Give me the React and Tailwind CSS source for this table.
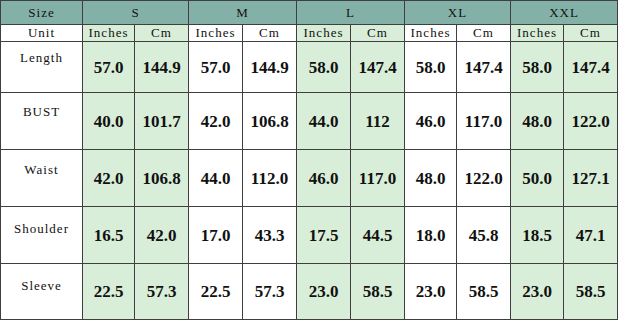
import React from "react";

const sizes = ["S", "M", "L", "XL", "XXL"];
const green = [true, false, true, false, true];

const rows = [
  { label: "Length", pt: "pt-[9px]", v: ["57.0", "144.9", "57.0", "144.9", "58.0", "147.4", "58.0", "147.4", "58.0", "147.4"] },
  { label: "BUST", pt: "pt-[12px]", v: ["40.0", "101.7", "42.0", "106.8", "44.0", "112", "46.0", "117.0", "48.0", "122.0"] },
  { label: "Waist", pt: "pt-[13px]", v: ["42.0", "106.8", "44.0", "112.0", "46.0", "117.0", "48.0", "122.0", "50.0", "127.1"] },
  { label: "Shoulder", pt: "pt-[15px]", v: ["16.5", "42.0", "17.0", "43.3", "17.5", "44.5", "18.0", "45.8", "18.5", "47.1"] },
  { label: "Sleeve", pt: "pt-[15px]", v: ["22.5", "57.3", "22.5", "57.3", "23.0", "58.5", "23.0", "58.5", "23.0", "58.5"] },
];

const mono = "font-['Liberation_Serif',serif] text-[13px] tracking-[1px] leading-[14px] text-[#111]";
const num = "font-['Liberation_Serif',serif] font-bold text-[17px] leading-none text-[#111]";

export default function App() {
  return (
    <div className="w-[620px] h-[322px] bg-white">
      <div className="w-[618px] bg-[#3f3f3f] p-px grid gap-px grid-cols-[81px_51px_53px_53px_53px_53px_53px_51px_53px_52px_53px] grid-rows-[23px_16px_50px_56px_56px_56px_55px]">
        <div className={`bg-[#84b1a7] flex items-center justify-center ${mono}`}>Size</div>
        {sizes.map((s) => (
          <div key={s} className={`col-span-2 bg-[#84b1a7] flex items-center justify-center ${mono}`}>{s}</div>
        ))}
        <div className={`bg-white flex items-center justify-center ${mono}`}>Unit</div>
        {sizes.map((s, i) => (
          <React.Fragment key={s}>
            <div className={`${green[i] ? "bg-[#d9eed8]" : "bg-white"} flex items-center justify-center ${mono}`}>Inches</div>
            <div className={`${green[i] ? "bg-[#d9eed8]" : "bg-white"} flex items-center justify-center ${mono}`}>Cm</div>
          </React.Fragment>
        ))}
        {rows.map((r) => (
          <React.Fragment key={r.label}>
            <div className={`bg-white flex justify-center ${r.pt} ${mono}`}>{r.label}</div>
            {r.v.map((val, j) => (
              <div key={j} className={`${green[Math.floor(j / 2)] ? "bg-[#d9eed8]" : "bg-white"} flex items-center justify-center ${num}`}>
                {val}
              </div>
            ))}
          </React.Fragment>
        ))}
      </div>
    </div>
  );
}
